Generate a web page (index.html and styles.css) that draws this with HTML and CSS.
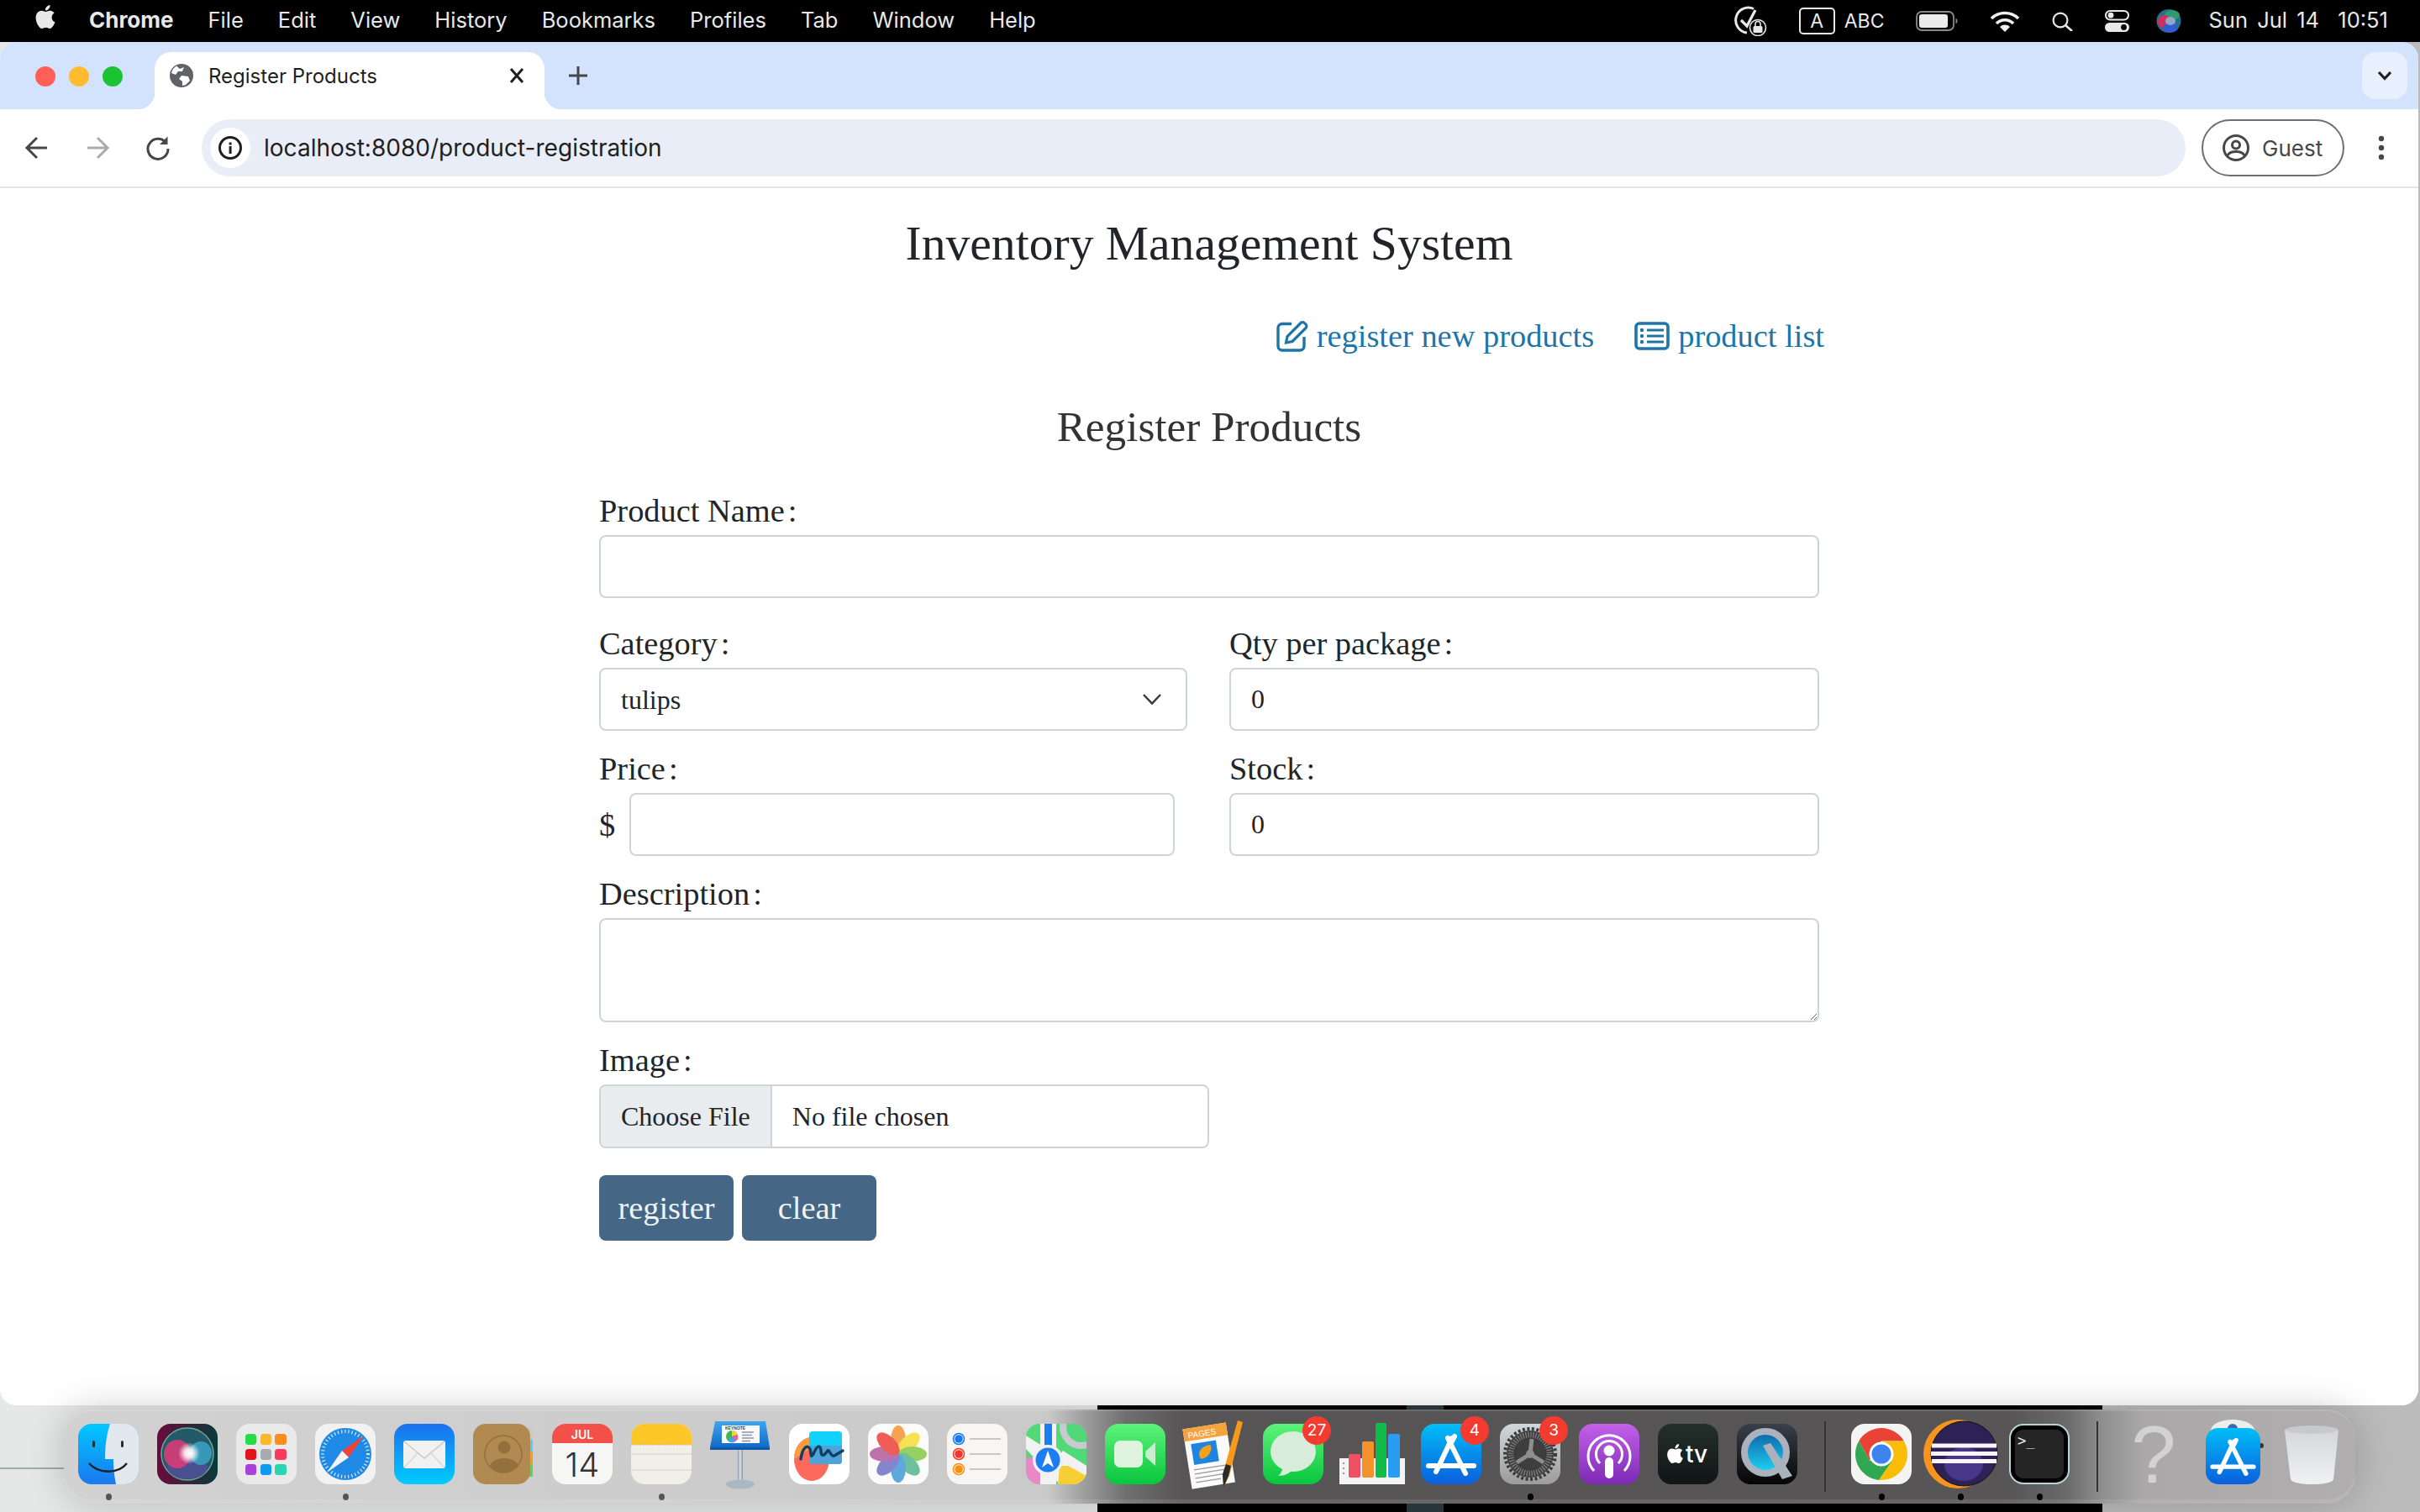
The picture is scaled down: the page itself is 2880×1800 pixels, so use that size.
FILE: index.html
```html
<!DOCTYPE html>
<html lang="en">
<head>
<meta charset="utf-8">
<title>Register Products</title>
<link rel="stylesheet" href="styles.css">
</head>
<body>
<svg class="defs" aria-hidden="true">
  <defs>
    <linearGradient id="gFinder" x1="0" y1="0" x2="0" y2="1"><stop offset="0" stop-color="#00c8ff"/><stop offset="1" stop-color="#1a78ee"/></linearGradient>
    <linearGradient id="gMail" x1="0" y1="0" x2="0" y2="1"><stop offset="0" stop-color="#1b70ee"/><stop offset="1" stop-color="#00ccff"/></linearGradient>
    <linearGradient id="gStore" x1="0" y1="0" x2="0" y2="1"><stop offset="0" stop-color="#00bdf7"/><stop offset="1" stop-color="#0b5fdc"/></linearGradient>
    <linearGradient id="gGreen" x1="0" y1="0" x2="0" y2="1"><stop offset="0" stop-color="#5df37a"/><stop offset="1" stop-color="#08c63d"/></linearGradient>
    <linearGradient id="gPod" x1="0" y1="0" x2="0" y2="1"><stop offset="0" stop-color="#c460ea"/><stop offset="1" stop-color="#7c2ab4"/></linearGradient>
    <linearGradient id="gGear" x1="0" y1="0" x2="0" y2="1"><stop offset="0" stop-color="#cfd8dc"/><stop offset="1" stop-color="#9c9c9a"/></linearGradient>
    <linearGradient id="gDark" x1="0" y1="0" x2="0" y2="1"><stop offset="0" stop-color="#24302c"/><stop offset="1" stop-color="#101515"/></linearGradient>
    <linearGradient id="gQt" x1="0" y1="0" x2="0" y2="1"><stop offset="0" stop-color="#3a3f4a"/><stop offset="1" stop-color="#050506"/></linearGradient>
    <linearGradient id="gQtIn" x1="0" y1="0" x2="0" y2="1"><stop offset="0" stop-color="#0c62a8"/><stop offset="1" stop-color="#1fd6f7"/></linearGradient>
    <linearGradient id="gSiri" x1="0" y1="0" x2="1" y2="0"><stop offset="0" stop-color="#6a0a3c"/><stop offset="1" stop-color="#083a38"/></linearGradient>
    <linearGradient id="gKey" x1="0" y1="0" x2="0" y2="1"><stop offset="0" stop-color="#3ea5ec"/><stop offset="1" stop-color="#1269c8"/></linearGradient>
    <linearGradient id="gTrash" x1="0" y1="0" x2="0" y2="1"><stop offset="0" stop-color="#d4d5d6"/><stop offset="1" stop-color="#f0f1f2"/></linearGradient>
    <linearGradient id="gStem" x1="0" y1="0" x2="1" y2="0"><stop offset="0" stop-color="#8a9aa6"/><stop offset=".5" stop-color="#dfe6ea"/><stop offset="1" stop-color="#7d8d99"/></linearGradient>
    <radialGradient id="gSpark" cx=".5" cy=".5" r=".5"><stop offset="0" stop-color="#ffffff"/><stop offset=".4" stop-color="#ffffff" stop-opacity=".85"/><stop offset="1" stop-color="#ffffff" stop-opacity="0"/></radialGradient>
    <symbol id="storeGlyph" viewBox="0 0 72 72">
      <path d="M9 50 H63" stroke="#fff" stroke-width="6" stroke-linecap="round" fill="none"/>
      <path d="M37 17 L22 49 L18 57 M32 17 L53 59 M40 15 L37 21" stroke="#fff" stroke-width="6" stroke-linecap="round" fill="none"/>
    </symbol>
  </defs>
</svg>

<div class="menubar">
  <div class="menu-left">
    <svg class="apple" viewBox="0 0 24 24"><path fill="#e8e8e8" d="M12.152 6.896c-.948 0-2.415-1.078-3.96-1.04-2.04.027-3.91 1.183-4.961 3.014-2.117 3.675-.546 9.103 1.519 12.09 1.013 1.454 2.208 3.09 3.792 3.039 1.52-.065 2.09-.987 3.935-.987 1.831 0 2.35.987 3.96.948 1.637-.026 2.676-1.48 3.676-2.948 1.156-1.688 1.636-3.325 1.662-3.415-.039-.013-3.182-1.221-3.22-4.857-.026-3.04 2.48-4.494 2.597-4.559-1.429-2.09-3.623-2.324-4.39-2.376-2-.156-3.675 1.09-4.61 1.09zM15.53 3.83c.843-1.012 1.4-2.427 1.245-3.83-1.207.052-2.662.805-3.532 1.818-.78.896-1.454 2.338-1.273 3.714 1.338.104 2.715-.688 3.559-1.701"/></svg>
    <span class="menu-app">Chrome</span>
    <span>File</span><span>Edit</span><span>View</span><span>History</span><span>Bookmarks</span><span>Profiles</span><span>Tab</span><span>Window</span><span>Help</span>
  </div>
  <div class="menu-right">
    <svg class="st st-check" viewBox="0 0 42 36">
      <path d="M26 3.5 A15 15 0 1 0 18 32" fill="none" stroke="#e8e8e8" stroke-width="3"/>
      <path d="M11 17 L18 24 L28 5" fill="none" stroke="#e8e8e8" stroke-width="3.2"/>
      <circle cx="31" cy="26" r="9.5" fill="#000" stroke="#e8e8e8" stroke-width="1.6"/>
      <rect x="25.5" y="24" width="11" height="8" rx="1.5" fill="#e8e8e8"/>
      <path d="M28 24 V21.5 a3 3 0 0 1 6 0 V24" fill="none" stroke="#e8e8e8" stroke-width="1.6"/>
    </svg>
    <div class="st-input">
      <span class="st-a">A</span><span>ABC</span>
    </div>
    <svg class="st st-batt" viewBox="0 0 50 24">
      <rect x="1" y="1" width="44" height="22" rx="6" fill="none" stroke="#8a8a8a" stroke-width="1.8"/>
      <rect x="4" y="4" width="34" height="16" rx="3" fill="#ececec"/>
      <path d="M47.5 8.5 a4 4 0 0 1 0 7 Z" fill="#8a8a8a"/>
    </svg>
    <svg class="st st-wifi" viewBox="0 0 36 25">
      <path d="M2 9 A23 23 0 0 1 34 9" fill="none" stroke="#f0f0f0" stroke-width="3.6"/>
      <path d="M8 15 A14 14 0 0 1 28 15" fill="none" stroke="#f0f0f0" stroke-width="3.6"/>
      <path d="M18 25 L12 19 A8.5 8.5 0 0 1 24 19 Z" fill="#f0f0f0"/>
    </svg>
    <svg class="st st-search" viewBox="0 0 25 23">
      <circle cx="10" cy="10" r="8.4" fill="none" stroke="#e8e8e8" stroke-width="2.2"/>
      <path d="M16 16 L24 23" stroke="#e8e8e8" stroke-width="2.6"/>
    </svg>
    <svg class="st st-cc" viewBox="0 0 29 26">
      <rect x="1" y="1" width="27" height="10.5" rx="5.2" fill="none" stroke="#e8e8e8" stroke-width="2"/>
      <circle cx="7" cy="6.2" r="3.4" fill="#e8e8e8"/>
      <rect x="0" y="15" width="29" height="11" rx="5.5" fill="#e8e8e8"/>
      <circle cx="22.5" cy="20.5" r="3.4" fill="#000"/>
    </svg>
    <svg class="st st-siri tight" viewBox="0 0 30 28">
      <ellipse cx="15" cy="14" rx="14.5" ry="14" fill="#27708c"/>
      <ellipse cx="19" cy="7" rx="9" ry="6" fill="#2e9a72"/>
      <ellipse cx="10" cy="15" rx="8" ry="8" fill="#d0305f"/>
      <ellipse cx="17" cy="22" rx="9" ry="5.5" fill="#2f5fd0"/>
      <ellipse cx="17" cy="14" rx="6" ry="5" fill="#8fa8c8"/>
    </svg>
    <span class="st-date tight">Sun Jul 14&nbsp;&nbsp;10:51</span>
  </div>
</div>

<div class="window">
  <div class="tabstrip">
    <div class="lights">
      <span class="light light-r"></span><span class="light light-y"></span><span class="light light-g"></span>
    </div>
    <div class="tab">
      <svg class="favicon" viewBox="0 0 28 28">
        <circle cx="14" cy="14" r="14" fill="#5f6368"/>
        <path d="M8 2.5 L12 6 L17 4 L15 9 L10 9 L7 13 L2 11 A13 13 0 0 1 8 2.5 Z" fill="#fff"/>
        <path d="M14 14 L22 15 L24 20 L19 25 L15 26 L15 21 L11 18 Z" fill="#fff"/>
      </svg>
      <span class="tab-title">Register Products</span>
      <svg class="tab-x" viewBox="0 0 24 24"><path d="M5 4 L19 20 M19 4 L5 20" stroke="#1f1f1f" stroke-width="3"/></svg>
    </div>
    <svg class="newtab" viewBox="0 0 24 24"><path d="M12 1 V23 M1 12 H23" stroke="#474747" stroke-width="3"/></svg>
    <div class="tabmenu">
      <svg class="tabmenu-ico" viewBox="0 0 18 12"><path d="M2 2 L9 9.5 L16 2" fill="none" stroke="#1f1f1f" stroke-width="3.2"/></svg>
    </div>
  </div>
  <div class="toolbar">
    <svg class="tool" viewBox="0 0 40 40"><path d="M32 20 H9 M20 8 L8 20 L20 32" fill="none" stroke="#474747" stroke-width="3"/></svg>
    <svg class="tool" viewBox="0 0 40 40"><path d="M8 20 H31 M20 8 L32 20 L20 32" fill="none" stroke="#acacac" stroke-width="3"/></svg>
    <svg class="tool" viewBox="0 0 40 40"><path d="M29.5 14 A12 12 0 1 0 32 21" fill="none" stroke="#474747" stroke-width="3"/><path d="M31.5 6.5 V16 H22 Z" fill="#474747"/></svg>
    <div class="omnibox">
      <span class="omni-chip">
        <svg class="omni-i" viewBox="0 0 28 28"><circle cx="14" cy="14" r="12.5" fill="none" stroke="#1f1f1f" stroke-width="3"/><rect x="12.6" y="12" width="3" height="9" fill="#1f1f1f"/><rect x="12.6" y="7.5" width="3" height="3" fill="#1f1f1f"/></svg>
      </span>
      <span class="omni-url">localhost:8080/product-registration</span>
    </div>
    <div class="guest">
      <svg class="guest-ico" viewBox="0 0 32 32">
        <circle cx="16" cy="16" r="14.5" fill="none" stroke="#474747" stroke-width="3"/>
        <circle cx="16" cy="12.5" r="4.5" fill="none" stroke="#474747" stroke-width="3"/>
        <path d="M6 25 C9 19 23 19 26 25" fill="none" stroke="#474747" stroke-width="3"/>
      </svg>
      <span>Guest</span>
    </div>
    <svg class="tool" viewBox="0 0 40 40"><circle cx="20" cy="9" r="3.2" fill="#474747"/><circle cx="20" cy="20" r="3.2" fill="#474747"/><circle cx="20" cy="31" r="3.2" fill="#474747"/></svg>
  </div>

  <main class="page">
    <h1 class="title">Inventory Management System</h1>
    <nav class="links">
      <a class="link" href="#">
        <svg class="link-edit" viewBox="0 0 38 38">
          <path d="M18 4.500 H7 a5 5 0 0 0 -5 5 V31 a5 5 0 0 0 5 5 H28 a5 5 0 0 0 5 -5 V20" fill="none" stroke="currentColor" stroke-width="3.4"/>
          <path d="M11.500 27 L13 19.500 L29 3.500 a3 3 0 0 1 4.300 0 L35 5.200 a3 3 0 0 1 0 4.300 L19 25.500 Z" fill="none" stroke="currentColor" stroke-width="3.2"/>
        </svg>
        <span>register new products</span>
      </a>
      <a class="link" href="#">
        <svg class="link-list" viewBox="0 0 42 34">
          <rect x="2" y="2" width="38" height="30" rx="4" fill="none" stroke="currentColor" stroke-width="3.6"/>
          <path d="M15 10 H35 M15 17 H35 M15 24 H35" stroke="currentColor" stroke-width="3.2"/>
          <circle cx="9" cy="10" r="2.200" fill="currentColor"/><circle cx="9" cy="17" r="2.200" fill="currentColor"/><circle cx="9" cy="24" r="2.200" fill="currentColor"/>
        </svg>
        <span>product list</span>
      </a>
    </nav>
    <h2 class="subtitle">Register Products</h2>
    <form class="form">
      <div class="field field-wide">
        <label class="label" for="name">Product Name<span class="colon">:</span></label>
        <input class="control" id="name" type="text">
      </div>
      <div class="grid">
        <div class="field">
          <label class="label" for="cat">Category<span class="colon">:</span></label>
          <select class="control select" id="cat"><option>tulips</option></select>
        </div>
        <div class="field">
          <label class="label" for="qty">Qty per package<span class="colon">:</span></label>
          <input class="control" id="qty" type="text" value="0">
        </div>
        <div class="field">
          <label class="label" for="price">Price<span class="colon">:</span></label>
          <div class="price"><span class="dollar">$</span><input class="control control-price" id="price" type="text"></div>
        </div>
        <div class="field">
          <label class="label" for="stock">Stock<span class="colon">:</span></label>
          <input class="control" id="stock" type="text" value="0">
        </div>
      </div>
      <div class="field field-area">
        <label class="label" for="desc">Description<span class="colon">:</span></label>
        <textarea class="control area" id="desc"></textarea>
      </div>
      <div class="field field-file">
        <label class="label" for="img">Image<span class="colon">:</span></label>
        <input class="file" id="img" type="file">
      </div>
      <div class="actions">
        <button class="btn" type="button">register</button>
        <button class="btn" type="button">clear</button>
      </div>
    </form>
  </main>
</div>

<div class="dock">
  <div class="app run"><svg class="ico" viewBox="0 0 72 72">
    <rect width="72" height="72" rx="16" fill="url(#gFinder)"/>
    <path d="M38 0 H56 a16 16 0 0 1 16 16 V56 a16 16 0 0 1 -16 16 H45 C43 62 42 54 42 42 H32 C32 25 34 12 38 0 Z" fill="#e3e8ee"/>
    <rect x="17" y="20" width="3" height="8" rx="1.500" fill="#233"/><rect x="51" y="20" width="3" height="8" rx="1.500" fill="#233"/>
    <path d="M13 47 C24 60 48 60 58 47" fill="none" stroke="#1a1f26" stroke-width="2.400"/>
  </svg></div>
  <div class="app"><svg class="ico" viewBox="0 0 72 72">
    <rect width="72" height="72" rx="16" fill="url(#gSiri)"/>
    <ellipse cx="36" cy="36" rx="31" ry="31" fill="#235a6a" stroke="#5fae96" stroke-width="1.500"/>
    <ellipse cx="36" cy="52" rx="24" ry="14" fill="#5a4aa0" opacity=".7"/>
    <ellipse cx="24" cy="36" rx="16" ry="17" fill="#e23a78" opacity=".85"/>
    <ellipse cx="52" cy="35" rx="13" ry="14" fill="#3aa0c0" opacity=".9"/>
    <circle cx="38" cy="35" r="13" fill="url(#gSpark)"/>
  </svg></div>
  <div class="app"><svg class="ico" viewBox="0 0 72 72">
    <rect width="72" height="72" rx="16" fill="#eaeaea"/>
    <rect x="11" y="12" width="13" height="13" rx="3.500" fill="#28d94a"/><rect x="29" y="12" width="13" height="13" rx="3.500" fill="#fbb82a"/><rect x="46" y="12" width="14" height="13" rx="3.500" fill="#fb8c1e"/>
    <rect x="11" y="30" width="13" height="13" rx="3.500" fill="#e1141e"/><rect x="29" y="30" width="13" height="13" rx="3.500" fill="#a5adb0"/><rect x="46" y="30" width="14" height="13" rx="3.500" fill="#fa3a5c"/>
    <rect x="11" y="48" width="13" height="13" rx="3.500" fill="#a743d8"/><rect x="29" y="48" width="13" height="13" rx="3.500" fill="#0d9bf0"/><rect x="46" y="48" width="14" height="13" rx="3.500" fill="#2cd5b2"/>
  </svg></div>
  <div class="app run"><svg class="ico" viewBox="0 0 72 72">
    <rect width="72" height="72" rx="16" fill="#f2f2f2"/>
    <circle cx="36" cy="36" r="31" fill="#1f8ae6"/>
    <circle cx="36" cy="36" r="27" fill="none" stroke="#d5ebfb" stroke-width="4" stroke-dasharray="1.200 3"/>
    <path d="M58 14 L32 32 L40 40 Z" fill="#f0433a"/>
    <path d="M14 58 L32 32 L40 40 Z" fill="#f4f4f4"/>
  </svg></div>
  <div class="app"><svg class="ico" viewBox="0 0 72 72">
    <rect width="72" height="72" rx="16" fill="url(#gMail)"/>
    <rect x="11" y="20" width="50" height="33" rx="3" fill="#f1f1f1"/>
    <path d="M12 21 L36 41 L60 21" fill="none" stroke="#c9c9c9" stroke-width="1.400"/>
    <path d="M12 52 L28 35 M60 52 L44 35" fill="none" stroke="#d4d4d4" stroke-width="1.200"/>
  </svg></div>
  <div class="app"><svg class="ico" viewBox="0 0 72 72">
    <rect x="60" y="18" width="11" height="16" fill="#5ac8fa"/><rect x="60" y="33" width="11" height="16" fill="#ff9a1f"/><rect x="60" y="48" width="11" height="15" fill="#4cd964"/>
    <rect x="60" y="4" width="11" height="15" fill="#c9c9c9"/>
    <rect width="68" height="72" rx="15" fill="#b08a50"/>
    <circle cx="36" cy="36" r="22" fill="none" stroke="#93703e" stroke-width="1.500"/>
    <circle cx="37" cy="28" r="7.500" fill="#93703e"/>
    <path d="M20 50 C24 38 50 38 54 50 A22 22 0 0 1 20 50 Z" fill="#93703e"/>
  </svg></div>
  <div class="app"><svg class="ico" viewBox="0 0 72 72">
    <rect width="72" height="72" rx="16" fill="#f6f6f5"/>
    <path d="M0 23 V16 A16 16 0 0 1 16 0 H56 A16 16 0 0 1 72 16 V23 Z" fill="#f4504a"/>
    <text class="cal-m" x="36" y="18" text-anchor="middle">JUL</text>
    <text class="cal-d" x="36" y="63" text-anchor="middle">14</text>
  </svg></div>
  <div class="app run"><svg class="ico" viewBox="0 0 72 72">
    <rect width="72" height="72" rx="16" fill="#f2efe8"/>
    <path d="M0 25 V16 A16 16 0 0 1 16 0 H56 A16 16 0 0 1 72 16 V25 Z" fill="#fdc827"/>
    <path d="M0 25 H72" stroke="#bbb" stroke-width="1.500" stroke-dasharray="1 1.500"/>
    <path d="M0 36 H72 M0 55 H72" stroke="#dcdad4" stroke-width="1.500"/>
  </svg></div>
  <div class="app"><svg class="ico" viewBox="0 0 72 72">
    <rect x="33" y="30" width="6" height="41" fill="url(#gStem)"/>
    <ellipse cx="36" cy="72" rx="17" ry="5.500" fill="#a9b8c2"/>
    <path d="M6 -3 H66 L71 28 H0 Z" fill="url(#gKey)"/>
    <rect x="0" y="28" width="71" height="3" fill="#0e5aa8"/>
    <path d="M14 2 H59 V23 H14 Z" fill="#fafafa"/>
    <text class="key-t" x="18" y="7">KEYNOTE</text>
    <circle cx="26" cy="15" r="7" fill="#42b649"/><path d="M26 15 V8 A7 7 0 0 1 33 13 Z" fill="#f6d33a"/><path d="M26 15 L33 13 A7 7 0 0 1 30 21 Z" fill="#ee5ba8"/><path d="M26 15 L30 21 A7 7 0 0 1 21 20 Z" fill="#3ea5ec"/>
    <path d="M38 10 H52 M38 13.500 H50 M38 17 H52 M38 20.500 H48" stroke="#8a97a6" stroke-width="1.300"/>
  </svg></div>
  <div class="app"><svg class="ico" viewBox="0 0 72 72">
    <rect width="72" height="72" rx="16" fill="#fff"/>
    <ellipse cx="27" cy="42" rx="21" ry="26" fill="#fd6a5c"/>
    <path d="M6 42 A21 26 0 0 1 25 16 L25 30 Z" fill="#fb9a3e"/>
    <rect x="24" y="9" width="39" height="39" rx="4" fill="#12d2fb"/>
    <path d="M24 26 H63 V44 a4 4 0 0 1 -4 4 H28 a4 4 0 0 1 -4 -4 Z" fill="#4ea4d8"/>
    <path d="M14 42 C16 28 22 24 25 30 C27 36 25 42 29 36 C33 26 37 24 38 32 C38 40 42 38 46 32 C48 30 50 40 54 38 L64 32" fill="none" stroke="#0f3f63" stroke-width="3.400" stroke-linecap="round"/>
  </svg></div>
  <div class="app"><svg class="ico" viewBox="0 0 72 72">
    <rect width="72" height="72" rx="16" fill="#fafbfa"/>
    <g opacity=".82">
      <ellipse cx="36" cy="19" rx="9" ry="17" fill="#f7902c"/>
      <ellipse cx="36" cy="19" rx="9" ry="17" fill="#f4dc2d" transform="rotate(45 36 36)"/>
      <ellipse cx="36" cy="19" rx="9" ry="17" fill="#7fc742" transform="rotate(90 36 36)"/>
      <ellipse cx="36" cy="19" rx="9" ry="17" fill="#4fb389" transform="rotate(135 36 36)"/>
      <ellipse cx="36" cy="19" rx="9" ry="17" fill="#3d97d9" transform="rotate(180 36 36)"/>
      <ellipse cx="36" cy="19" rx="9" ry="17" fill="#6b6cc2" transform="rotate(225 36 36)"/>
      <ellipse cx="36" cy="19" rx="9" ry="17" fill="#b1559b" transform="rotate(270 36 36)"/>
      <ellipse cx="36" cy="19" rx="9" ry="17" fill="#ec3b34" transform="rotate(315 36 36)"/>
    </g>
  </svg></div>
  <div class="app"><svg class="ico" viewBox="0 0 72 72">
    <rect width="72" height="72" rx="16" fill="#f7f6f3"/>
    <circle cx="14" cy="18" r="6.500" fill="#fff" stroke="#1878f0" stroke-width="1.500"/><circle cx="14" cy="18" r="4.800" fill="#1878f0"/>
    <circle cx="14" cy="36" r="6.500" fill="#fff" stroke="#f5352a" stroke-width="1.500"/><circle cx="14" cy="36" r="4.800" fill="#f5352a"/>
    <circle cx="14" cy="54" r="6.500" fill="#fff" stroke="#f8900e" stroke-width="1.500"/><circle cx="14" cy="54" r="4.800" fill="#f8900e"/>
    <path d="M27 18 H64 M27 36 H64 M27 54 H64" stroke="#c8c8c8" stroke-width="2"/>
  </svg></div>
  <div class="app"><svg class="ico" viewBox="0 0 72 72">
    <defs><clipPath id="cMaps"><rect width="72" height="72" rx="16"/></clipPath></defs>
    <g clip-path="url(#cMaps)">
      <rect width="72" height="72" fill="#52d977"/>
      <path d="M0 14 L72 60 V72 H40 L0 30 Z" fill="#f2f2f2"/>
      <rect x="0" y="40" width="17" height="32" fill="#e888c8"/>
      <rect x="17" y="0" width="19" height="72" fill="#f2f2f2"/>
      <rect x="22" y="0" width="9" height="40" fill="#1a7ef0"/>
      <path d="M40 50 H72 V72 H38 Z" fill="#f7cf35"/>
      <path d="M36 42 L72 62 V50 L44 32 Z" fill="#f2f2f2"/>
      <circle cx="66" cy="4" r="22" fill="none" stroke="#c9c9d0" stroke-width="8"/>
      <circle cx="26" cy="43" r="18" fill="#eef0f5"/>
      <circle cx="26" cy="43" r="14.500" fill="#1a7ef0"/>
      <path d="M26 32 L33 52 L26 47 L19 52 Z" fill="#fff"/>
    </g>
  </svg></div>
  <div class="app"><svg class="ico" viewBox="0 0 72 72">
    <rect width="72" height="72" rx="16" fill="url(#gGreen)"/>
    <rect x="11" y="20" width="34" height="32" rx="7" fill="#dff3df"/>
    <path d="M48 33 L60 22 V50 L48 39 Z" fill="#c8edcc"/>
  </svg></div>
  <div class="app"><svg class="ico" viewBox="0 0 72 72">
    <g transform="rotate(-9 30 40)">
      <rect x="4" y="2" width="52" height="72" fill="#fafafa"/>
      <rect x="4" y="2" width="52" height="15" fill="#f7a23b"/>
      <text class="pages-t" x="9" y="14">PAGES</text>
      <rect x="11" y="21" width="30" height="25" fill="#1d84e0"/>
      <path d="M20 40 C14 26 34 24 34 26 C36 32 28 42 20 40 Z" fill="#f7a01e"/>
      <path d="M10 52 H48 M10 57 H48 M10 62 H48 M10 67 H40" stroke="#999" stroke-width="1.300"/>
    </g>
    <path d="M64 -4 L70 -2 L54 62 L47 76 L46 60 Z" fill="#f59a1c"/>
    <path d="M50 48 L56 50 L53 62 L47 76 L46 60 Z" fill="#2a2a2a"/>
  </svg></div>
  <div class="app"><svg class="ico" viewBox="0 0 72 72">
    <rect width="72" height="72" rx="16" fill="url(#gGreen)"/>
    <ellipse cx="36" cy="33" rx="27" ry="24" fill="#d7ecd9"/>
    <path d="M24 52 C22 58 20 61 18 62 C25 62 30 60 34 56 Z" fill="#d7ecd9"/>
  </svg><span class="badge">27</span></div>
  <div class="app"><svg class="ico" viewBox="0 0 72 72">
    <rect x="-3" y="41" width="78" height="31" fill="#f4f4f4"/>
    <rect x="8" y="36" width="14" height="28" rx="2" fill="#ef5063"/>
    <rect x="24" y="21" width="14" height="43" rx="2" fill="#f5912a"/>
    <rect x="40" y="-1" width="13" height="65" rx="2" fill="#10bb49"/>
    <rect x="55" y="12" width="14" height="52" rx="2" fill="#2a9cf2"/>
    <path d="M2 46 V62" stroke="#999" stroke-width="2" stroke-dasharray="2 4"/>
  </svg></div>
  <div class="app"><svg class="ico" viewBox="0 0 72 72">
    <rect width="72" height="72" rx="16" fill="url(#gStore)"/>
    <use href="#storeGlyph" width="72" height="72"/>
  </svg><span class="badge">4</span></div>
  <div class="app run run-dark"><svg class="ico" viewBox="0 0 72 72">
    <rect width="72" height="72" rx="16" fill="url(#gGear)"/>
    <circle cx="36" cy="36" r="28" fill="#3a3a3a"/>
    <circle cx="36" cy="36" r="30" fill="none" stroke="#3a3a3a" stroke-width="4" stroke-dasharray="3 2.500"/>
    <circle cx="36" cy="36" r="23" fill="none" stroke="#7c7c7c" stroke-width="7" stroke-dasharray="1.400 1.600"/>
    <circle cx="36" cy="36" r="18" fill="#3e3e3e"/>
    <path d="M36 36 L38 18 M36 36 L20 46 M36 36 L52 46" stroke="#8e8e8e" stroke-width="5"/>
    <circle cx="36" cy="36" r="5" fill="#8e8e8e"/>
  </svg><span class="badge">3</span></div>
  <div class="app"><svg class="ico" viewBox="0 0 72 72">
    <rect width="72" height="72" rx="16" fill="url(#gPod)"/>
    <path d="M18 56 A25 25 0 1 1 54 56" fill="none" stroke="#fff" stroke-width="3"/>
    <path d="M25 47 A15.500 15.500 0 1 1 47 47" fill="none" stroke="#fff" stroke-width="3"/>
    <circle cx="36" cy="32" r="6.500" fill="#fff"/>
    <rect x="31" y="40" width="10" height="25" rx="5" fill="#fff"/>
  </svg></div>
  <div class="app"><svg class="ico" viewBox="0 0 72 72">
    <rect width="72" height="72" rx="16" fill="url(#gDark)"/>
    <svg x="9" y="24" width="23" height="23" viewBox="0 0 24 24"><path fill="#fff" d="M12.152 6.896c-.948 0-2.415-1.078-3.96-1.04-2.04.027-3.91 1.183-4.961 3.014-2.117 3.675-.546 9.103 1.519 12.09 1.013 1.454 2.208 3.09 3.792 3.039 1.52-.065 2.09-.987 3.935-.987 1.831 0 2.35.987 3.96.948 1.637-.026 2.676-1.48 3.676-2.948 1.156-1.688 1.636-3.325 1.662-3.415-.039-.013-3.182-1.221-3.22-4.857-.026-3.04 2.48-4.494 2.597-4.559-1.429-2.09-3.623-2.324-4.39-2.376-2-.156-3.675 1.09-4.61 1.09zM15.530 3.830c.843-1.012 1.400-2.427 1.245-3.830-1.207.052-2.662.805-3.532 1.818-.780.896-1.454 2.338-1.273 3.714 1.338.104 2.715-.688 3.559-1.701"/></svg>
    <text class="tv-t" x="33" y="46">tv</text>
  </svg></div>
  <div class="app"><svg class="ico" viewBox="0 0 72 72">
    <rect width="72" height="72" rx="16" fill="url(#gQt)"/>
    <circle cx="34" cy="34" r="25" fill="url(#gQtIn)" stroke="#aab2bd" stroke-width="8"/>
    <path d="M31 26 L40 23 L66 62 L54 66 Z" fill="#aab2bd"/>
  </svg></div>
  <span class="sep"></span>
  <div class="app run run-dark"><svg class="ico" viewBox="0 0 72 72">
    <rect width="72" height="72" rx="16" fill="#f4f4f2"/>
    <path d="M9.200 20.500 A31 31 0 0 1 62.800 20.500 H36 L22 44 Z" fill="#e94335"/>
    <path d="M9.200 20.500 A31 31 0 0 0 33 66.900 L49 44 H22 Z" fill="#2fa851"/>
    <path d="M62.800 20.500 A31 31 0 0 1 33 66.900 L49 44 V30 L36 20.500 Z" fill="#fbbc05"/>
    <circle cx="36" cy="36" r="14.500" fill="#fff"/>
    <circle cx="36" cy="36" r="11.500" fill="#3f83ee"/>
  </svg></div>
  <div class="app run run-dark"><svg class="ico" viewBox="0 0 72 72">
    <ellipse cx="33" cy="36" rx="41" ry="41" fill="#f7941d"/>
    <ellipse cx="40.500" cy="35.500" rx="39.500" ry="38.500" fill="#2c2255" stroke="#111" stroke-width="1"/>
    <ellipse cx="40" cy="48" rx="23" ry="20" fill="#473788"/>
    <path d="M2 26 H79" stroke="#f6f5fa" stroke-width="5"/>
    <path d="M1 35.500 H80" stroke="#f6f5fa" stroke-width="5"/>
    <path d="M2 44.500 H79" stroke="#f6f5fa" stroke-width="5"/>
  </svg></div>
  <div class="app run run-dark"><svg class="ico" viewBox="0 0 72 72">
    <rect x="1" y="1" width="70" height="70" rx="16" fill="#000" stroke="#b9d3da" stroke-width="2"/>
    <rect x="7" y="7" width="58" height="58" rx="9" fill="#252525"/>
    <text class="term-t" x="10" y="26">&gt;_</text>
  </svg></div>
  <span class="sep"></span>
  <div class="app"><svg class="ico" viewBox="0 0 72 72">
    <text class="help-t" x="36" y="70" text-anchor="middle">?</text>
  </svg></div>
  <div class="app"><svg class="ico" viewBox="0 0 72 72">
    <ellipse cx="36" cy="8" rx="26" ry="13" fill="#eeeeee"/>
    <circle cx="36" cy="6" r="6" fill="#3a6bb0"/>
    <circle cx="70" cy="26" r="3" fill="#333"/>
    <rect x="4" y="5" width="65" height="67" rx="15" fill="url(#gStore)"/>
    <use href="#storeGlyph" x="4" y="6" width="65" height="65"/>
  </svg></div>
  <div class="app"><svg class="ico" viewBox="0 0 72 72">
    <path d="M4 8 C4 2 68 2 68 8 L62 66 C60 74 14 74 11 66 Z" fill="url(#gTrash)"/>
    <ellipse cx="36" cy="7" rx="31" ry="5" fill="#c8c9ca"/>
  </svg></div>
</div>
</body>
</html>
```
FILE: styles.css
```css
* { box-sizing: border-box; }
html, body { margin: 0; height: 1800px; overflow: hidden; }
body {
  width: 2880px;
  background:
    linear-gradient(#9cabab, #9cabab) 0 1747px / 76px 2px no-repeat,
    linear-gradient(90deg, #e6e7e7 0 1306px, #000 1306px 1674px, #2c3c40 1674px 1718px, #000 1718px 2502px, #bcbbbb 2502px);
  display: flex;
  flex-direction: column;
  font-family: "Liberation Serif", serif;
}
.defs { position: absolute; width: 0; height: 0; }

/* macOS menu bar */
.menubar {
  height: 50px;
  background: #000;
  color: #e8e8e8;
  font-family: Inter, "Noto Sans", sans-serif;
  font-size: 25.5px;
  display: flex;
  align-items: center;
  justify-content: space-between;
  flex: none;
}
.menu-left { display: flex; align-items: center; gap: 41px; padding-left: 40px; padding-bottom: 4px; }
.apple { width: 28px; height: 32px; margin-right: -3px; margin-top: -6px; }
.menu-app { font-weight: 700; font-size: 26px; }
.menu-right { display: flex; align-items: center; gap: 38px; padding-right: 38px; }
.st { display: block; flex: none; }
.st-check { width: 42px; height: 36px; }
.st-input { display: flex; align-items: center; gap: 11px; font-size: 23px; }
.st-a { width: 43px; height: 32px; border: 2px solid #e8e8e8; border-radius: 5px; display: flex; align-items: center; justify-content: center; }
.st-batt { width: 50px; height: 24px; }
.st-wifi { width: 36px; height: 25px; }
.st-search { width: 25px; height: 23px; }
.st-cc { width: 29px; height: 26px; }
.st-siri { width: 30px; height: 28px; }
.tight { margin-left: -6px; }
.st-date { white-space: nowrap; word-spacing: 4px; padding-bottom: 3px; }

/* browser window */
.window {
  width: 2878px;
  height: 1623px;
  flex: none;
  background: #fff;
  border-radius: 20px;
  overflow: hidden;
  display: flex;
  flex-direction: column;
}
.tabstrip {
  height: 80px;
  flex: none;
  background: #d3e3fd;
  display: flex;
  align-items: center;
  padding: 0 13px 0 42px;
}
.lights { display: flex; gap: 16px; margin-top: 2px; }
.light { width: 24px; height: 24px; border-radius: 50%; }
.light-r { background: #ff5f57; }
.light-y { background: #febc2e; }
.light-g { background: #19c332; }
.tab {
  position: relative;
  align-self: flex-end;
  width: 464px;
  height: 68px;
  margin-left: 38px;
  background: #fff;
  border-radius: 20px 20px 0 0;
  display: flex;
  align-items: center;
  padding: 0 21px 12px 18px;
  gap: 18px;
  font-family: Inter, "Noto Sans", sans-serif;
  font-size: 24px;
  color: #1f1f1f;
}
.tab::before, .tab::after {
  content: "";
  position: absolute;
  bottom: 0;
  width: 20px;
  height: 20px;
}
.tab::before { left: -20px; background: radial-gradient(circle at 0 0, #d3e3fd 20px, #fff 20.5px); }
.tab::after { right: -20px; background: radial-gradient(circle at 100% 0, #d3e3fd 20px, #fff 20.5px); }
.favicon { width: 28px; height: 28px; flex: none; }
.tab-title { flex: 1; white-space: nowrap; }
.tab-x { width: 24px; height: 24px; flex: none; }
.newtab { width: 24px; height: 24px; margin-left: 28px; flex: none; }
.tabmenu {
  margin-left: auto;
  width: 54px;
  height: 56px;
  background: #e9f0fd;
  border-radius: 16px;
  display: flex;
  align-items: center;
  justify-content: center;
}
.tabmenu-ico { width: 18px; height: 12px; }

.toolbar {
  height: 94px;
  flex: none;
  background: #fff;
  border-bottom: 2px solid #e3e3e3;
  border-radius: 16px 16px 0 0;
  display: flex;
  align-items: center;
  gap: 32px;
  padding: 0 24px;
  font-family: Inter, "Noto Sans", sans-serif;
}
.tool { width: 40px; height: 40px; flex: none; }
.omnibox {
  flex: 1;
  height: 68px;
  margin-right: -13px;
  background: #e9edf7;
  border-radius: 34px;
  display: flex;
  align-items: center;
  gap: 16px;
  padding-left: 10px;
}
.omni-chip { width: 48px; height: 48px; background: #fff; border-radius: 50%; display: flex; align-items: center; justify-content: center; }
.omni-i { width: 28px; height: 28px; }
.omni-url { font-size: 28.05px; color: #1f1f1f; white-space: nowrap; }
.guest {
  width: 170px;
  height: 68px;
  flex: none;
  margin-right: -8px;
  border: 2px solid #6f6f6f;
  border-radius: 34px;
  display: flex;
  align-items: center;
  gap: 15px;
  padding-left: 23px;
  font-size: 26px;
  color: #474747;
}
.guest-ico { width: 32px; height: 32px; flex: none; }

/* page */
.page {
  flex: 1;
  background: #fff;
  padding-top: 32px;
  color: #212529;
}
.title { margin: 0; font-weight: 400; font-size: 57.6px; line-height: 67px; text-align: center; }
.links {
  width: 1458px;
  margin: 54px 0 0 713px;
  display: flex;
  justify-content: flex-end;
  gap: 48px;
  height: 46px;
}
.link { display: flex; align-items: center; gap: 10px; color: #1d75a8; font-size: 38.4px; line-height: 46px; text-decoration: none; }
.link-edit { width: 38px; height: 38px; flex: none; }
.link-list { width: 42px; height: 34px; flex: none; }
.subtitle { margin: 54px 0 0; font-weight: 400; font-size: 51.2px; line-height: 61px; text-align: center; color: #333; }
.form { width: 1452px; margin: 41px 0 0 713px; }
.label { display: block; font-size: 38.4px; line-height: 58px; height: 58px; }
.colon { margin-left: 4px; }
.field-wide { margin-bottom: 25px; }
.grid { display: grid; grid-template-columns: 700px 702px; column-gap: 50px; row-gap: 16px; margin-bottom: 16px; }
.control {
  display: block;
  width: 100%;
  height: 75px;
  border: 2px solid #ced4da;
  border-radius: 8px;
  padding: 0 24px;
  background-color: #fff;
  color: #212529;
  font-family: "Liberation Serif", serif;
  font-size: 32px;
  outline: none;
}
.select {
  appearance: none;
  background-image: url("data:image/svg+xml,%3Csvg xmlns='http://www.w3.org/2000/svg' viewBox='0 0 22 13'%3E%3Cpath d='M1 1 L11 11.500 L21 1' fill='none' stroke='%23343a40' stroke-width='2.500'/%3E%3C/svg%3E");
  background-repeat: no-repeat;
  background-position: right 29px center;
  background-size: 22px 13px;
}
.price { display: flex; align-items: center; gap: 17px; width: 685px; }
.dollar { font-size: 38.4px; flex: none; }
.control-price { flex: 1; }
.area { height: 124px; padding: 12px 24px; resize: both; }
.field-area { margin-bottom: 16px; }
.field-file { margin-bottom: 32px; }
.file {
  display: block;
  width: 726px;
  height: 76px;
  padding: 0;
  border: 2px solid #ced4da;
  border-radius: 8px;
  overflow: hidden;
  color: #212529;
  font-family: "Liberation Serif", serif;
  font-size: 32px;
  line-height: 72px;
}
.file::file-selector-button {
  height: 72px;
  margin: 0 24px 0 0;
  padding: 0 24px;
  border: 0;
  border-right: 2px solid #ced4da;
  background: #e9ecef;
  color: #212529;
  font: inherit;
}
.actions { display: flex; gap: 10px; }
.btn {
  width: 160px;
  height: 78px;
  border: 0;
  border-radius: 8px;
  background: #456685;
  color: #f1f3f5;
  font-family: "Liberation Serif", serif;
  font-size: 38.4px;
  padding: 0;
}

/* dock */
.dock {
  position: relative;
  z-index: 2;
  flex: none;
  width: 2727px;
  height: 112px;
  margin: 5px 0 0 76px;
  padding: 17px 16px 0 17px;
  display: flex;
  align-items: flex-start;
  gap: 22px;
  border-radius: 34px;
  background: linear-gradient(90deg, #d2d2d2 0, #cac9c9 1172px, #9a9a9a 1218px, #706f6f 1264px, #565454 1333px, #575555 2314px, #696969 2382px, #909090 2428px, #aaa8a8 2474px, #b0aeae 2727px);
  box-shadow: 0 0 46px rgba(0, 0, 0, .2), inset 0 2px 0 rgba(255, 255, 255, .12), inset 0 -5px 0 rgba(255, 255, 255, .1);
}
.app { position: relative; width: 72px; height: 72px; flex: none; }
.ico { display: block; width: 72px; height: 72px; overflow: visible; }
.run::after {
  content: "";
  position: absolute;
  left: 50%;
  bottom: -19px;
  width: 7px;
  height: 8px;
  margin-left: -3.5px;
  border-radius: 50%;
  background: #555;
}
.run-dark::after { background: #000; }
.badge {
  position: absolute;
  left: 47px;
  top: -9px;
  width: 34px;
  height: 34px;
  border-radius: 50%;
  background: #f33b30;
  color: #fff;
  font-family: Inter, "Noto Sans", sans-serif;
  font-size: 19px;
  line-height: 34px;
  text-align: center;
}
.sep { width: 2px; height: 84px; margin: -3px 8px 0 10px; background: #333; flex: none; }
.cal-m { font-family: Inter, sans-serif; font-size: 14px; font-weight: 600; fill: #fff; }
.cal-d { font-family: Inter, sans-serif; font-size: 40px; font-weight: 300; fill: #333; }
.key-t { font-family: "Liberation Sans", sans-serif; font-size: 5px; font-weight: 700; fill: #444; }
.pages-t { font-family: "Liberation Sans", sans-serif; font-size: 10px; fill: #fff; }
.tv-t { font-family: Inter, sans-serif; font-size: 28px; font-weight: 500; fill: #fff; }
.term-t { font-family: "DejaVu Sans Mono", monospace; font-size: 17px; fill: #eee; }
.help-t { font-family: "Liberation Sans", sans-serif; font-size: 96px; fill: #d2d2d2; }
```
